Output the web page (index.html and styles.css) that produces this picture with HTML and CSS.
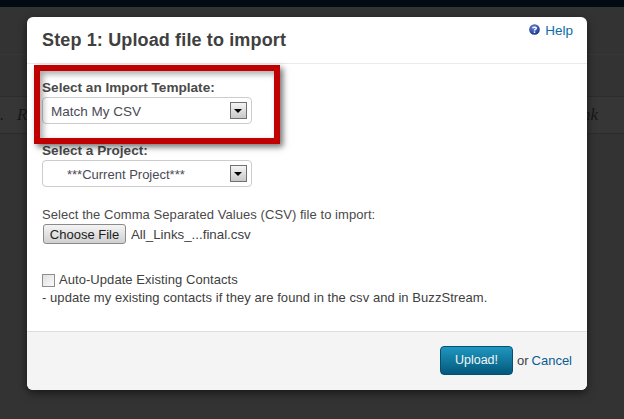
FILE: index.html
```html
<!DOCTYPE html>
<html lang="en">
<head>
<meta charset="utf-8">
<title>Upload file to import</title>
<link rel="stylesheet" href="styles.css">
</head>
<body>
<div class="page">
  <div class="topbar"></div>
  <div class="band-upper"></div>
  <div class="band-row"><span class="crumb">. &nbsp;&nbsp;R</span><span class="crumb">nk</span></div>
</div>
<section class="modal">
  <header class="modal-head">
    <h1>Step 1: Upload file to import</h1>
    <a class="help" href="#">
      <svg class="help-icon" viewBox="0 0 12 12" width="11" height="11" aria-hidden="true">
        <defs><radialGradient id="hg" cx="40%" cy="30%" r="75%"><stop offset="0" stop-color="#6a86d8"/><stop offset="1" stop-color="#132f86"/></radialGradient></defs>
        <circle cx="6" cy="6" r="5.8" fill="url(#hg)"/>
        <path d="M4 4.6 C4 3.2 8 3.000 8 4.700 C8 5.900 6 5.700 6 7.200" fill="none" stroke="#fff" stroke-width="1.500"/>
        <rect x="5.200" y="8.100" width="1.600" height="1.600" fill="#fff"/>
      </svg>
      Help
    </a>
  </header>
  <div class="modal-body">
    <label class="field-label">Select an Import Template:</label>
    <div class="select"><span class="select-text">Match My CSV</span><span class="select-arrow"></span></div>
    <label class="field-label second">Select a Project:</label>
    <div class="select"><span class="select-text centered">***Current Project***</span><span class="select-arrow"></span></div>
    <p class="file-label">Select the Comma Separated Values (CSV) file to import:</p>
    <div class="file-row"><button class="file-btn" type="button">Choose File</button><span class="file-name">All_Links_...final.csv</span></div>
    <label class="check-row"><input class="check" type="checkbox"><span>Auto-Update Existing Contacts</span></label>
    <p class="hint">- update my existing contacts if they are found in the csv and in BuzzStream.</p>
  </div>
  <footer class="modal-foot">
    <button class="upload" type="button">Upload!</button>
    <span class="or">or</span>
    <a class="cancel" href="#">Cancel</a>
  </footer>
</section>
<div class="callout"></div>
</body>
</html>
```
FILE: styles.css
```css
* { box-sizing: border-box; }
html, body { margin: 0; height: 100%; }
body {
  background: #333333;
  overflow: hidden;
  font-family: "Liberation Sans", Arial, sans-serif;
  color: #404040;
}
.page { display: flex; flex-direction: column; height: 419px; }
.topbar { height: 7px; background: #020b13; }
.band-upper { height: 48px; border-bottom: 1px solid #383838; }
.band-row {
  height: 38px;
  margin-top: 41px;
  background: #363636;
  border-top: 1px solid #2c2c2c;
  border-bottom: 1px solid #2c2c2c;
  display: flex;
  justify-content: space-between;
  align-items: center;
  padding: 0 26px 0 0;
  font-family: "Liberation Serif", serif;
  font-style: italic;
  font-size: 17px;
  color: #161616;
}
.modal {
  position: absolute;
  left: 27px;
  top: 17px;
  width: 560px;
  height: 373px;
  background: #fff;
  border-radius: 6px;
  box-shadow: 0 3px 9px rgba(0,0,0,.55);
  display: flex;
  flex-direction: column;
  overflow: hidden;
}
.modal-head {
  height: 47px;
  flex: none;
  border-bottom: 1px solid #eaeaea;
  display: flex;
  justify-content: space-between;
  align-items: flex-start;
  padding: 12px 14px 0 15px;
}
.modal-head h1 {
  margin: 0;
  font-size: 18px;
  line-height: 22px;
  font-weight: bold;
  letter-spacing: 0.14px;
  color: #404040;
}
.help {
  display: flex;
  align-items: center;
  gap: 5px;
  margin-top: -6px;
  font-size: 13.5px;
  line-height: 16px;
  color: #0a6ea8;
  text-decoration: none;
}
.help-icon { margin-top: -4px; }
.modal-body {
  flex: 1;
  padding: 16px 15px 0;
}
.field-label {
  display: block;
  font-size: 13.6px;
  font-weight: bold;
  line-height: 16px;
  color: #4a4a4a;
}
.field-label.second { margin-top: 19px; }
.select {
  width: 210px;
  height: 27px;
  margin-top: 1px;
  border: 1px solid #cccccc;
  border-radius: 4px;
  background: #fff;
  display: flex;
  align-items: center;
  justify-content: space-between;
  padding: 0 3px 0 8px;
  font-size: 13.5px;
  color: #4a4a55;
}
.select-text { padding-top: 1px; }
.select-text.centered { margin-left: 16px; font-size: 13px; }
.select-arrow {
  width: 17px;
  height: 17px;
  border: 1px solid #707070;
  background: linear-gradient(#f4f4f4, #c8c8c8);
  position: relative;
  margin-right: 1px;
}
.select-arrow::after {
  content: "";
  position: absolute;
  left: 3px;
  top: 6px;
  border-left: 4px solid transparent;
  border-right: 4px solid transparent;
  border-top: 4px solid #000;
}
.file-label {
  margin: 21px 0 0;
  font-size: 13px;
  letter-spacing: 0.06px;
  line-height: 14px;
  color: #4a4a4a;
}
.file-row { display: flex; align-items: center; gap: 5px; margin-top: 2px; }
.file-btn {
  width: 83px;
  height: 20px;
  padding: 0;
  margin-left: 1px;
  border: 1px solid #8a8a8a;
  border-radius: 3px;
  background: linear-gradient(#f4f4f4, #d0d0d0);
  font-family: "Liberation Sans", Arial, sans-serif;
  font-size: 13px;
  color: #1c1c1c;
}
.file-name { font-size: 13.3px; color: #404040; }
.check-row {
  display: flex;
  align-items: center;
  gap: 4px;
  margin-top: 29px;
  font-size: 13px;
  letter-spacing: 0.06px;
  line-height: 14px;
}
.check {
  appearance: none;
  width: 13px;
  height: 13px;
  margin: 0;
  border: 1px solid #8e8e8e;
  background: linear-gradient(135deg, #e0e0e0, #fafafa);
}
.hint { margin: 4px 0 0; font-size: 13px; letter-spacing: 0.06px; line-height: 14px; color: #404040; }
.modal-foot {
  height: 59px;
  flex: none;
  background: #f4f4f4;
  border-top: 1px solid #dedede;
  display: flex;
  justify-content: flex-end;
  align-items: center;
  padding: 0 15px 2px 0;
  font-size: 13px;
}
.upload {
  width: 73px;
  height: 29px;
  padding: 0;
  border: 1px solid #05506f;
  border-radius: 4px;
  background: linear-gradient(#1f97bf, #04587c);
  color: #f2f6f8;
  font-family: "Liberation Sans", Arial, sans-serif;
  font-size: 12.5px;
}
.or { margin-left: 4px; color: #404040; }
.cancel { margin-left: 3px; color: #0a5d94; text-decoration: none; }
.callout {
  position: absolute;
  left: 34px;
  top: 65px;
  width: 246px;
  height: 79px;
  border: 6px solid #c00000;
  box-shadow: 3px 3px 6px rgba(0,0,0,.55), inset 3px 3px 6px rgba(0,0,0,.35);
}
```
